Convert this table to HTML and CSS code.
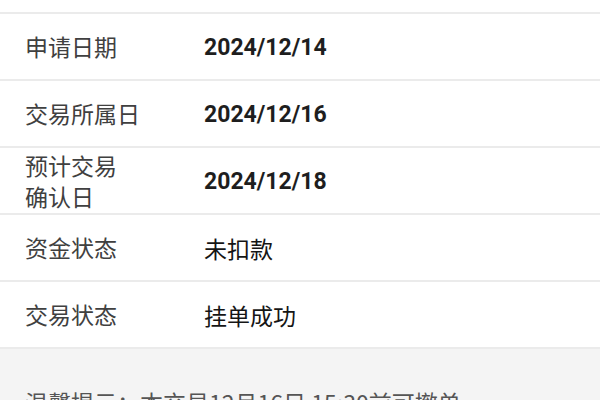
FILE: index.html
```html
<!DOCTYPE html>
<html lang="zh-CN">
<head>
<meta charset="utf-8">
<link rel="stylesheet" href="styles.css">
</head>
<body>
<div class="page">
  <div class="top"></div>
  <div class="list">
    <div class="row"><div class="label">申请日期</div><div class="value num">2024/12/14</div></div>
    <div class="row"><div class="label">交易所属日</div><div class="value num">2024/12/16</div></div>
    <div class="row"><div class="label">预计交易<br>确认日</div><div class="value num">2024/12/18</div></div>
    <div class="row"><div class="label">资金状态</div><div class="value">未扣款</div></div>
    <div class="row"><div class="label">交易状态</div><div class="value">挂单成功</div></div>
  </div>
  <div class="tip">温馨提示：本交易12月16日 15:30前可撤单</div>
</div>
</body>
</html>
```
FILE: styles.css
```css
html, body {
  margin: 0;
  padding: 0;
  background: #ffffff;
}
.page {
  width: 600px;
  height: 400px;
  overflow: hidden;
  font-family: "Noto Sans CJK SC", Roboto, sans-serif;
}
.top {
  height: 12px;
  background: #ffffff;
}
.row {
  display: flex;
  align-items: center;
  height: 65px;
  border-top: 2px solid #ebebeb;
  padding-left: 25px;
}
.label {
  width: 179px;
  font-size: 23px;
  line-height: 31px;
  color: #404040;
}
.value {
  font-size: 23px;
  color: #151515;
  font-weight: 400;
}
.value.num {
  font-family: Roboto, sans-serif;
  font-weight: 700;
  font-size: 23px;
  color: #1e1e1e;
  padding-top: 2px;
}
.tip {
  border-top: 2px solid #ebebeb;
  background: #f4f4f4;
  height: 60px;
  padding: 38px 0 0 25px;
  font-size: 23px;
  line-height: 30px;
  color: #555555;
  white-space: nowrap;
}
```
